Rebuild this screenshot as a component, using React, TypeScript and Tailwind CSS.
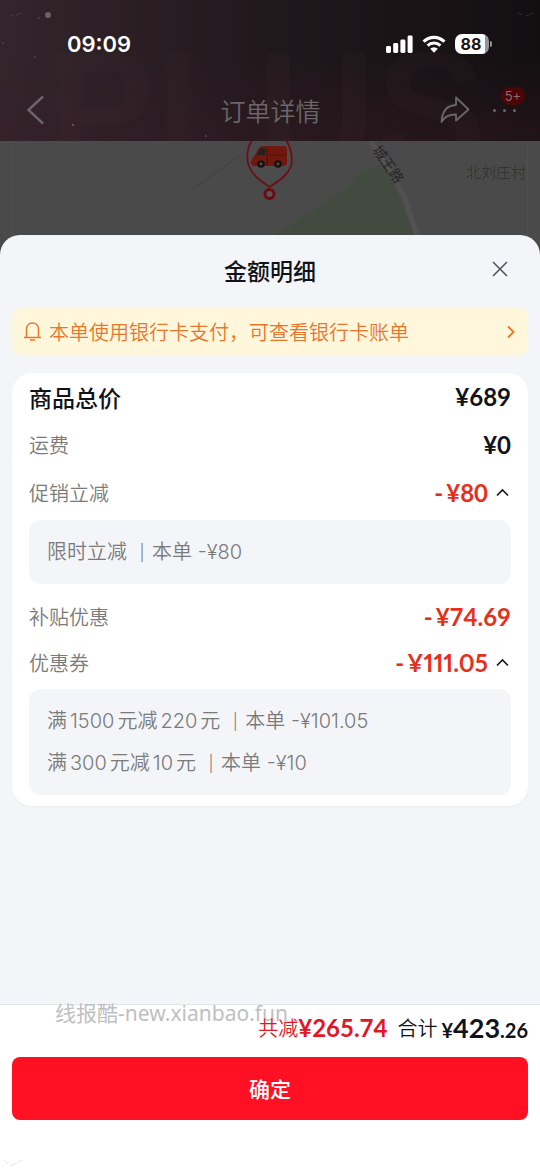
import { ReactNode } from 'react'
import clsx from 'clsx'

const detail = (text: string) =>
  text.split(/(\d+)/).map((part, i) =>
    /^\d+$/.test(part) ? (
      <span key={i} className="mx-[3px]">
        {part}
      </span>
    ) : (
      part
    )
  )

interface Discount {
  name: string
  amount: string
}

function StatusBar() {
  return (
    <div className="relative flex h-[88px] items-center justify-between pl-[67px] pr-12 text-white">
      <span className="font-['Inter',sans-serif] text-[22px] font-semibold leading-7">09:09</span>
      <div className="flex items-center gap-[9px]">
        <svg width="27" height="18" viewBox="0 0 27 18" fill="currentColor">
          <rect x="0" y="11" width="5" height="7" rx="1.4" />
          <rect x="7.2" y="8" width="5" height="10" rx="1.4" />
          <rect x="14.4" y="4.5" width="5" height="13.5" rx="1.4" />
          <rect x="21.6" y="0.5" width="5" height="17.5" rx="1.4" />
        </svg>
        <svg width="24" height="18" viewBox="0 0 24 18" fill="none" stroke="currentColor">
          <path d="M1.6 6.6A14.8 14.8 0 0 1 22.4 6.6" strokeWidth="3.2" />
          <path d="M5.6 10.6A9.2 9.2 0 0 1 18.4 10.6" strokeWidth="3" />
          <path d="M12 17.8 8.2 13.7A5.4 5.4 0 0 1 15.8 13.7Z" fill="currentColor" stroke="none" />
        </svg>
        <div className="flex items-center gap-px">
          <span className="flex h-5 w-[34px] items-center justify-center rounded-[7px] bg-gradient-to-r from-white from-88% to-[#979497] to-88% pr-0.5 font-['Inter',sans-serif] text-base font-bold leading-5 text-[#181416]">
            88
          </span>
          <span className="h-[6px] w-0.5 rounded-r-full bg-[#979497]" />
        </div>
      </div>
    </div>
  )
}

function Header() {
  return (
    <header className="relative h-[141px] overflow-hidden bg-linear-to-r from-[#33252b] via-[#21181c] to-[#130f11]">
      <div className="absolute inset-0 bg-linear-to-b from-transparent from-40% to-[#3a1c26]/35" />
      <span
        aria-hidden="true"
        className="absolute left-[46px] top-[17px] font-['Liberation_Sans',sans-serif] text-[165px] font-bold leading-[184px] text-[#5a4246]/8"
      >
        PLUS
      </span>
      <svg className="absolute left-0 top-0" width="540" height="141" fill="#6b6066">
        <circle cx="48" cy="15" r="3" />
        <circle cx="39" cy="18" r="1" opacity="0.5" />
        <circle cx="3" cy="43" r="1" opacity="0.5" />
        <circle cx="35" cy="57" r="1" opacity="0.5" />
        <circle cx="73" cy="125" r="1.2" opacity="0.8" />
        <circle cx="206" cy="136" r="1.2" opacity="0.5" />
        <path d="M10 15l3 1M16 15l6-2M518 13l4 2M526 16l8-3" stroke="#6b6066" opacity="0.35" />
      </svg>
      <StatusBar />
      <div className="relative flex h-11 items-center justify-between pl-[26px] pr-6 text-[#6a666a]">
        <button aria-label="返回" className="w-[75px]">
          <svg width="19" height="30" viewBox="0 0 19 30" fill="none" stroke="currentColor" strokeWidth="2.4">
            <path d="M17 1.5 2.5 15 17 28.5" />
          </svg>
        </button>
        <h1 className="text-[25px] font-[350] leading-8">订单详情</h1>
        <div className="flex items-center gap-[23px]">
          <button aria-label="分享">
            <svg width="30" height="28" viewBox="0 0 30 28" fill="none" stroke="currentColor" strokeWidth="1.8" strokeLinejoin="round">
              <path d="M16 1.500 28.500 13.500 16 24.500V18.500C9 18.300 4.500 20.500 1.500 26 2 16 6 9.500 16 9Z" />
            </svg>
          </button>
          <button aria-label="更多" className="relative flex gap-[7px]">
            <span className="size-[3px] rounded-full bg-current" />
            <span className="size-[3px] rounded-full bg-current" />
            <span className="size-[3px] rounded-full bg-current" />
            <span className="absolute -top-[22px] left-2 flex h-[18px] w-6 items-center justify-center rounded-full bg-[#4d0508] font-['Inter',sans-serif] text-[13px] leading-4 text-[#8a6a6c]">
              5+
            </span>
          </button>
        </div>
      </div>
    </header>
  )
}

function DeliveryMap() {
  return (
    <svg className="block h-[110px] w-full bg-[#4a4a4a]" viewBox="0 0 540 110" preserveAspectRatio="xMidYMin slice">
      <path d="M12.500 0V110M527.500 0V110" stroke="#505050" />
      <path d="M192 49 239 15" stroke="#434343" strokeWidth="1.200" />
      <path d="M272 97 297 79 331 57 348 48 356 35 378 24 388 28 420 110H262Z" fill="#434a40" />
      <path d="M370 0C388 24 396 42 404 55L422 110" fill="none" stroke="#525252" strokeWidth="5" />
      <text
        transform="translate(372 9) rotate(55)"
        fill="#242424"
        className="font-['Noto_Sans_CJK_SC',sans-serif] text-[14px]"
      >
        城王路
      </text>
      <text x="466" y="37" fill="#303030" className="font-['Noto_Sans_CJK_SC',sans-serif] text-[15px] font-light">
        北刘庄村
      </text>
      <path d="M253-2C247 5 246 17 249 25 253 36 263 41 269.500 46 276 41 287 36 291 25 293 17 291 5 285-2" fill="#4c4c4c" stroke="#6d0d15" strokeWidth="1.800" />
      <path d="M251 20C253 15 256 14 257 10 259 6 261 5 265 5H284Q287 5 287 8V23L284 25H253Q250 23 251 20Z" fill="#71180e" />
      <path d="M257 13 261 7H265V14H256Z" fill="#251f20" />
      <path d="M267 7V24M269 14H286" stroke="#4b100b" strokeWidth="1.200" />
      <circle cx="261" cy="23" r="3.800" fill="#17110f" />
      <circle cx="278" cy="23" r="3.800" fill="#17110f" />
      <circle cx="261" cy="23" r="1.400" fill="#55504c" />
      <circle cx="278" cy="23" r="1.400" fill="#55504c" />
      <circle cx="269.500" cy="53" r="4.500" fill="#565656" stroke="#6b0b10" strokeWidth="3" />
    </svg>
  )
}

interface PriceRowProps {
  label: string
  children: ReactNode
  className?: string
  expanded?: boolean
}

function PriceRow({ label, children, className, expanded }: PriceRowProps) {
  return (
    <div className={clsx('flex items-center justify-between', className)}>
      <span>{label}</span>
      <div className="flex items-center gap-2 font-['Lato',sans-serif] text-2xl font-bold">
        <span className="flex gap-[3px] text-[#e5301b]">{children}</span>
        {expanded && (
          <button aria-label="收起" className="pr-[2px] text-[#1a1a1a]">
            <svg width="13" height="24" viewBox="0 0 13 24" fill="none" stroke="currentColor" strokeWidth="1.7">
              <path d="M1 14.500 6.500 9 12 14.500" />
            </svg>
          </button>
        )}
      </div>
    </div>
  )
}

function DiscountBox({ items }: { items: Discount[] }) {
  return (
    <ul className="mt-[3px] flex flex-col gap-0.5 rounded-xl bg-[#f4f5f9] px-[18px] py-3 font-['Inter','Noto_Sans_CJK_SC',sans-serif]">
      {items.map(item => (
        <li key={item.name} className="flex h-10 items-center">
          <span>{detail(item.name)}</span>
          <span className="ml-[5px] w-5 text-center text-base">|</span>
          <span>本单 {item.amount}</span>
        </li>
      ))}
    </ul>
  )
}

export default function App() {
  return (
    <div className="flex min-h-screen flex-col bg-[#4a4a4a] font-['Noto_Sans_CJK_SC',sans-serif]">
      <Header />
      <DeliveryMap />

      <section className="relative -mt-4 flex flex-1 flex-col rounded-t-[20px] bg-[#f4f5f9]">
        <div className="flex h-[73px] items-center justify-center pb-1">
          <h2 className="text-[23px] font-medium leading-8 text-[#11131a]">金额明细</h2>
          <button aria-label="关闭" className="absolute right-8 top-[26px] text-[#505259]">
            <svg width="16" height="16" viewBox="0 0 16 16" fill="none" stroke="currentColor" strokeWidth="1.500">
              <path d="M1 1 15 15M15 1 1 15" />
            </svg>
          </button>
        </div>

        <a href="#" className="mx-3 flex h-[47px] items-center rounded-lg bg-[#fff7dc] px-3 text-xl font-[350] text-[#e8762c]">
          <svg width="17" height="19" viewBox="0 0 17 19" fill="none" stroke="currentColor" strokeWidth="1.500">
            <path d="M0 15.500H17M2.500 15.500V7.500C2.500 3.500 5 1 8.500 1S14.500 3.500 14.500 7.500V15.500" />
            <path d="M6 18H11" />
          </svg>
          <span className="ml-2 flex-1">本单使用银行卡支付，可查看银行卡账单</span>
          <svg width="10" height="14" viewBox="0 0 10 14" fill="none" stroke="currentColor" strokeWidth="1.800">
            <path d="M2 1.500 7.500 7 2 12.500" />
          </svg>
        </a>

        <div className="mx-3 mt-[18px] rounded-[20px] bg-white px-[17px] pb-[11px] text-xl font-[350] text-[#7a7a7a] shadow-sm shadow-black/3">
          <div className="flex h-12 items-center justify-between text-[#11131a]">
            <span className="text-[23px] font-medium">商品总价</span>
            <span className="font-['Lato',sans-serif] text-2xl font-bold">¥689</span>
          </div>
          <PriceRow label="运费" className="h-12">
            <span className="text-[#11131a]">¥0</span>
          </PriceRow>
          <PriceRow label="促销立减" className="h-12" expanded>
            <span>-</span>
            <span>¥80</span>
          </PriceRow>
          <DiscountBox items={[{ name: '限时立减', amount: '-¥80' }]} />
          <PriceRow label="补贴优惠" className="mt-[10px] h-[46px]">
            <span>-</span>
            <span>¥74.69</span>
          </PriceRow>
          <PriceRow label="优惠券" className="h-[46px]" expanded>
            <span>-</span>
            <span className="proportional-nums">¥111.05</span>
          </PriceRow>
          <DiscountBox
            items={[
              { name: '满1500元减220元', amount: '-¥101.05' },
              { name: '满300元减10元', amount: '-¥10' }
            ]}
          />
        </div>

        <footer className="relative mt-auto border-t border-[#e4e5e8] bg-white px-3 pb-[54px]">
          <span className="absolute -top-2 left-[55px] font-['Noto_Sans','Noto_Sans_CJK_SC',sans-serif] text-[21px] leading-8 text-[#bfbfbf]">
            线报酷-new.xianbao.fun
          </span>
          <div className="relative flex h-[52px] items-center justify-end pb-1.5 text-xl font-[350] text-[#11131a]">
            <span className="text-[#e31626]">共减</span>
            <span className="mr-[10px] font-['Lato',sans-serif] text-2xl font-bold text-[#e31626]">¥265.74</span>
            <span>合计</span>
            <span className="ml-1 font-['Lato',sans-serif] text-xl font-bold">
              ¥<span className="text-[27px]">423</span>.26
            </span>
          </div>
          <button className="h-[63px] w-full rounded-lg bg-[#ff1023] text-[21px] font-medium text-white">确定</button>
          <svg className="absolute bottom-1 left-1" width="20" height="14" fill="none" stroke="#e8e8e8">
            <path d="M0 4 4 8M6 10 13 7M14 6 18 4" />
          </svg>
        </footer>
      </section>
    </div>
  )
}
